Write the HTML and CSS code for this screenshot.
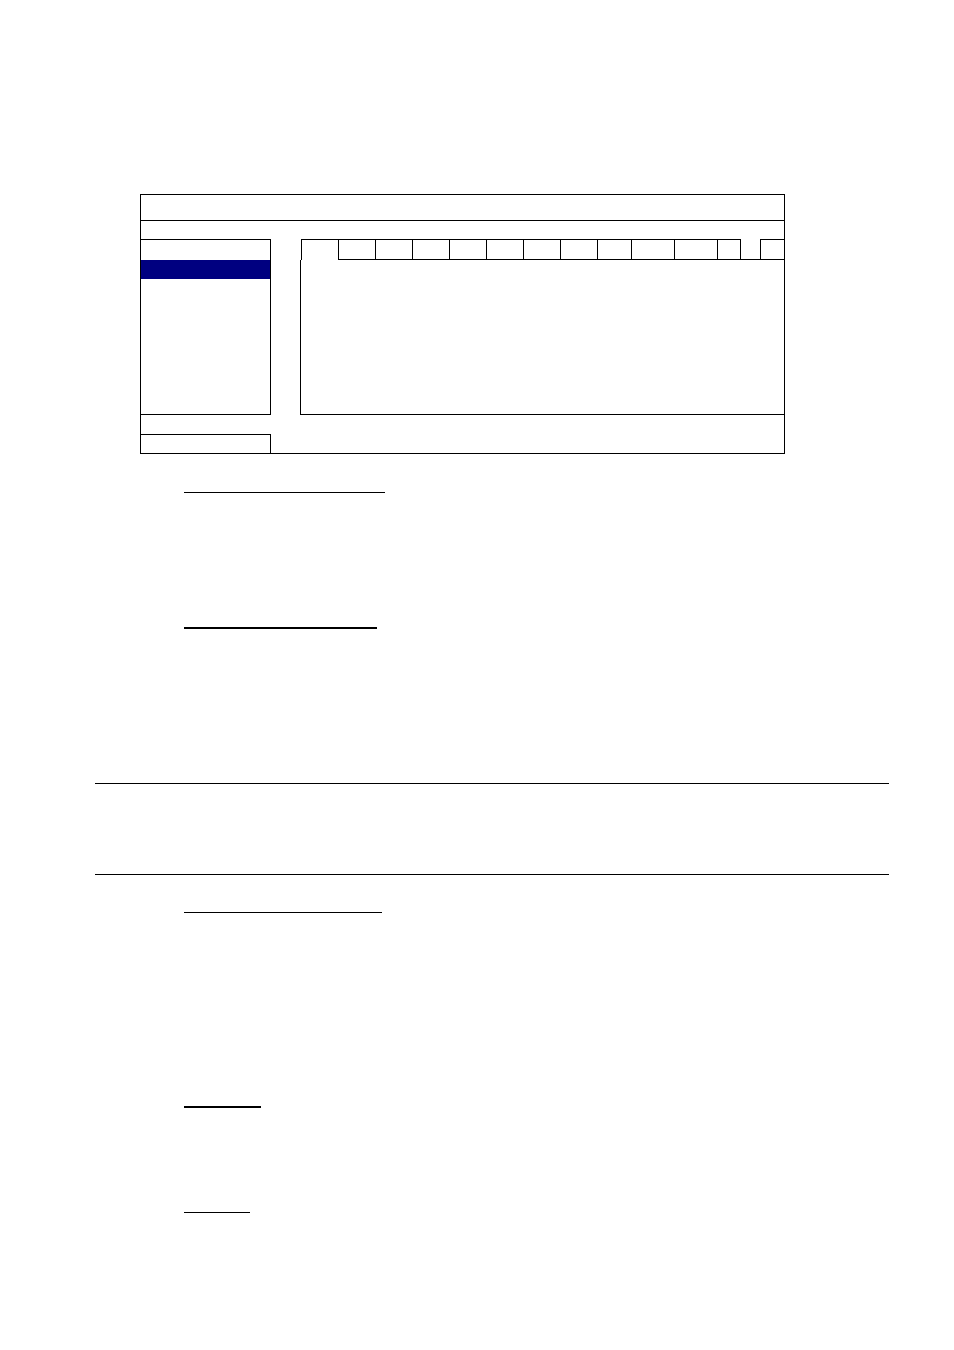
FILE: index.html
```html
<!DOCTYPE html>
<html lang="en">
<head>
<meta charset="utf-8">
<title>Setup</title>
<link rel="stylesheet" href="styles.css">
</head>
<body>
<main class="page">
  <section class="dialog">
    <div class="dlg-title"></div>
    <div class="dlg-spacer-a"></div>
    <div class="dlg-body">
      <div class="menu-list">
        <div class="menu-item"></div>
        <div class="menu-item selected"></div>
      </div>
      <div class="tab-panel">
        <div class="tabs">
          <div class="tab active w37"></div>
          <div class="tab w37"></div>
          <div class="tab w37"></div>
          <div class="tab w37"></div>
          <div class="tab w37"></div>
          <div class="tab w37"></div>
          <div class="tab w37"></div>
          <div class="tab w37"></div>
          <div class="tab w34"></div>
          <div class="tab w43"></div>
          <div class="tab w43"></div>
          <div class="tab w23 last"></div>
          <div class="tab-gap"></div>
          <div class="tab end"></div>
        </div>
        <div class="pane"></div>
      </div>
    </div>
    <div class="dlg-spacer-b"></div>
    <div class="dlg-footer">
      <div class="footer-box"></div>
    </div>
  </section>

  <div class="heading h1"></div>
  <div class="heading h2"></div>
  <div class="rule r1"></div>
  <div class="rule r2"></div>
  <div class="heading h3"></div>
  <div class="heading h4"></div>
  <div class="heading h5"></div>
</main>
</body>
</html>
```
FILE: styles.css
```css
html, body {
  margin: 0;
  padding: 0;
  background: #ffffff;
  font-family: "Liberation Sans", Arial, sans-serif;
}

.page {
  width: 954px;
  height: 1350px;
  padding-top: 194px;
  box-sizing: border-box;
}

.dialog {
  margin-left: 140px;
  width: 645px;
  height: 260px;
  box-sizing: border-box;
  border: 1px solid #000;
  display: flex;
  flex-direction: column;
}

.dlg-title {
  height: 26px;
  box-sizing: border-box;
  border-bottom: 1px solid #000;
}

.dlg-spacer-a { height: 18px; }

.dlg-body {
  height: 176px;
  display: flex;
}

.menu-list {
  width: 130px;
  height: 176px;
  box-sizing: border-box;
  border-top: 1px solid #000;
  border-right: 1px solid #000;
  border-bottom: 1px solid #000;
}

.menu-item { height: 20px; }
.menu-item.selected {
  height: 19px;
  background: #000080;
}

.tab-panel {
  margin-left: 29px;
  flex: 1;
  display: flex;
  flex-direction: column;
}

.tabs {
  display: flex;
  height: 21px;
}

.tab {
  box-sizing: border-box;
  height: 21px;
  border-top: 1px solid #000;
  border-left: 1px solid #000;
  border-bottom: 1px solid #000;
}
.tab.active {
  border-bottom: none;
  margin-left: 1px;
}
.tab.last { border-right: 1px solid #000; width: 24px; }
.w37 { width: 37px; }
.w34 { width: 34px; }
.w43 { width: 43px; }

.tab-gap {
  width: 19px;
  height: 21px;
  box-sizing: border-box;
  border-bottom: 1px solid #000;
}
.tab.end { flex: 1; }

.pane {
  height: 155px;
  box-sizing: border-box;
  border-left: 1px solid #000;
  border-bottom: 1px solid #000;
}

.dlg-spacer-b { height: 19px; }

.dlg-footer {
  height: 19px;
  display: flex;
}
.footer-box {
  width: 130px;
  box-sizing: border-box;
  border-top: 1px solid #000;
  border-right: 1px solid #000;
}

.heading {
  margin-left: 184px;
  height: 1px;
  background: #000;
}
.h1 { margin-top: 38px; width: 201px; }
.h2 { margin-top: 134px; width: 193px; height: 2px; }
.h3 { margin-top: 37px; width: 198px; }
.h4 { margin-top: 193px; width: 77px; height: 2px; }
.h5 { margin-top: 104px; width: 66px; }

.rule {
  margin-left: 95px;
  width: 794px;
  height: 1px;
  background: #000;
}
.r1 { margin-top: 154px; }
.r2 { margin-top: 90px; }
```
